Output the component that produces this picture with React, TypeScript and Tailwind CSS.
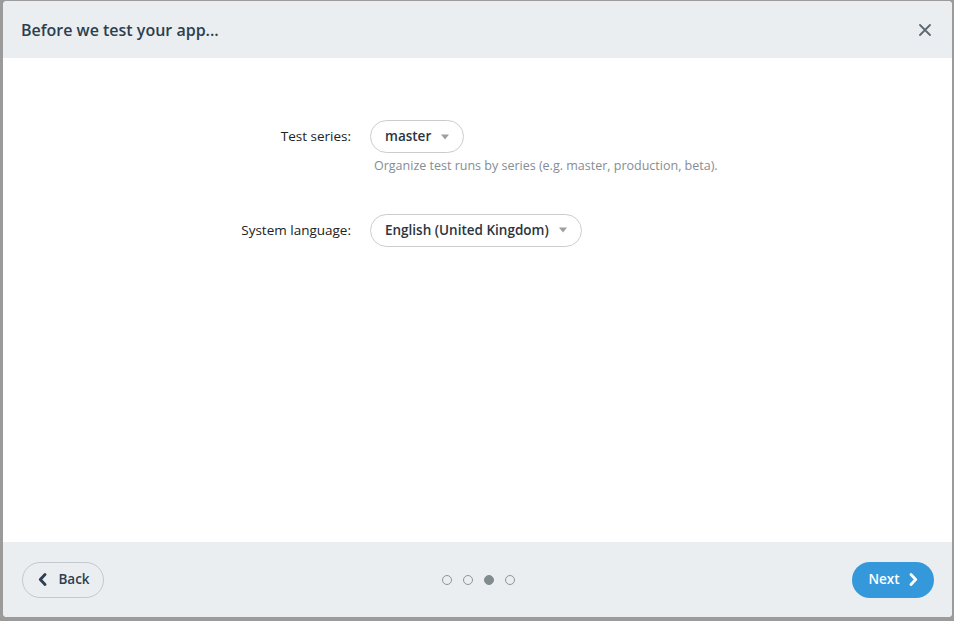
import React from 'react';

const Caret = () => (
  <svg width="8" height="6" viewBox="0 0 8 6" className="ml-2.5">
    <path d="M0 0.5h8L4 5.5z" fill="#9a9fa3" />
  </svg>
);

const App: React.FC = () => {
  const steps = [0, 1, 2, 3];
  const current = 2;

  return (
    <div
      className="w-[954px] h-[621px] bg-[#9b9b9b] pl-[3px] pr-[2px] pt-[1px] pb-[4px]"
      style={{ fontFamily: '"Open Sans", "Noto Sans", sans-serif' }}
    >
      <div className="h-full flex flex-col bg-white rounded-[4px] overflow-hidden">
        {/* header */}
        <div className="h-[57px] bg-[#ebeef0] flex items-center justify-between pl-[18px] pr-[21px]">
          <h1 className="text-[16px] font-semibold text-[#2c3e50]">Before we test your app...</h1>
          <svg width="12" height="12" viewBox="0 0 12 12">
            <path d="M1 1l10 10M11 1L1 11" stroke="#5b6872" strokeWidth="1.8" strokeLinecap="round" />
          </svg>
        </div>

        {/* body */}
        <div className="flex-1 pt-[62px]">
          <div className="grid grid-cols-[348px_1fr] gap-x-[19px] items-start">
            <div className="h-[33px] flex items-center justify-end text-[13.5px] text-[#222]">Test series:</div>
            <div>
              <div className="inline-flex items-center h-[33px] px-[14px] border border-[#c9cdd0] rounded-full text-[13.5px] font-semibold text-[#2b3440]">
                master
                <Caret />
              </div>
              <p className="mt-[4px] ml-[4px] text-[12.5px] text-[#848d94]">
                Organize test runs by series (e.g. master, production, beta).
              </p>
            </div>

            <div className="mt-[38px] h-[33px] flex items-center justify-end text-[13.5px] text-[#222]">System language:</div>
            <div className="mt-[38px]">
              <div className="inline-flex items-center h-[33px] px-[14px] border border-[#c9cdd0] rounded-full text-[13.5px] font-semibold text-[#2b3440]">
                English (United Kingdom)
                <Caret />
              </div>
            </div>
          </div>
        </div>

        {/* footer */}
        <div className="h-[75px] bg-[#ebeef0] flex items-center justify-between pl-[19px] pr-[18px]">
          <button className="w-[82px] h-[36px] rounded-full border border-[#c3c8cc] flex items-center justify-center gap-[11px] pl-[2px] text-[13.5px] font-semibold text-[#2c3e50]">
            <svg width="9" height="13" viewBox="0 0 9 13">
              <path d="M7 1.5L2.3 6.5 7 11.5" stroke="#2c3e50" strokeWidth="2.8" fill="none" strokeLinecap="round" strokeLinejoin="round" />
            </svg>
            Back
          </button>
          <div className="flex items-center gap-[11px]">
            {steps.map((s) => (
              <span
                key={s}
                className={
                  s === current
                    ? 'w-[10px] h-[10px] rounded-full bg-[#7f8b8c] border border-[#7f8b8c]'
                    : 'w-[10px] h-[10px] rounded-full border border-[#8e9596]'
                }
              />
            ))}
          </div>
          <button className="w-[82px] h-[36px] rounded-full bg-[#3498db] flex items-center justify-center gap-[9px] text-[13.5px] font-semibold text-white">
            Next
            <svg width="9" height="13" viewBox="0 0 9 13">
              <path d="M2 1.5L6.7 6.5 2 11.5" stroke="#fff" strokeWidth="2.8" fill="none" strokeLinecap="round" strokeLinejoin="round" />
            </svg>
          </button>
        </div>
      </div>
    </div>
  );
};

export default App;
